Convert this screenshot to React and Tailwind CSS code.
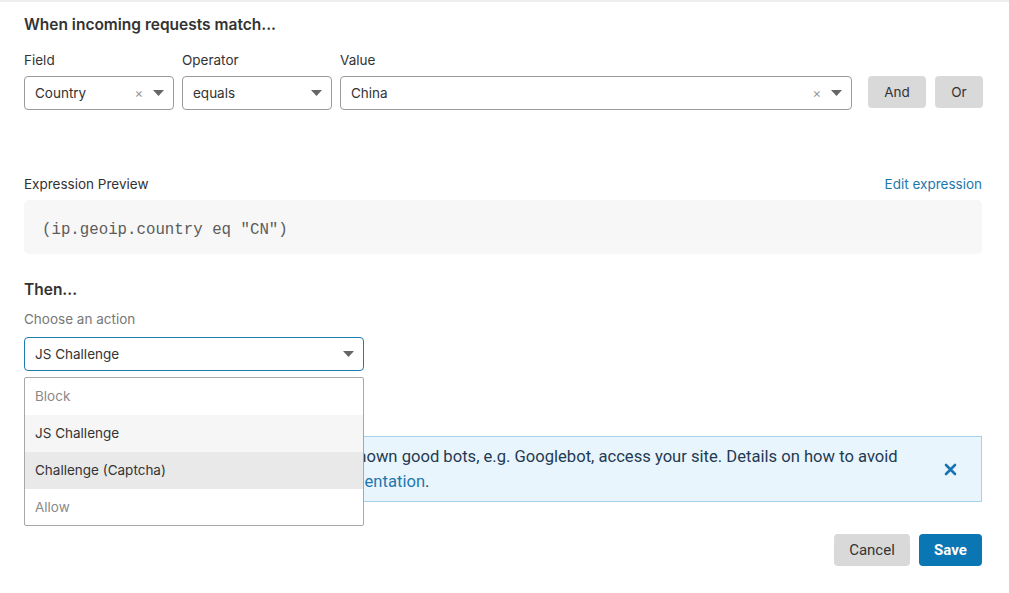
import React from "react";

const Caret = () => (
  <svg width="11" height="6" viewBox="0 0 11 6" className="shrink-0">
    <path d="M0 0 L11 0 L5.5 6 Z" fill="#666" />
  </svg>
);

const Clear = () => (
  <span className="text-[13px] leading-none text-[#999] mr-[10px]" style={{ fontFamily: "Inter, sans-serif" }}>
    ×
  </span>
);

function SelectBox({ width, value, clearable }) {
  return (
    <div
      className={`${width} h-[34px] flex items-center border border-[#9a9a9a] rounded-[4px] bg-white pl-[10px] pr-[9px]`}
    >
      <span className="flex-1 text-[13.5px] text-[#333]">{value}</span>
      {clearable && <Clear />}
      <Caret />
    </div>
  );
}

export default function App() {
  return (
    <div
      className="w-[1009px] h-[593px] bg-white border-t-2 border-[#eeeeee] overflow-hidden"
      style={{ fontFamily: "Inter, 'Noto Sans', sans-serif" }}
    >
      <div className="ml-6 w-[958px] pt-[11px]">
        <h2 className="text-[15.5px] leading-[24px] font-semibold text-[#333]">
          When incoming requests match...
        </h2>

        <div className="mt-[13px] flex items-start">
          <div className="flex flex-col">
            <span className="text-[13.5px] leading-[20px] text-[#333]">Field</span>
            <div className="mt-[6px]">
              <SelectBox width="w-[150px]" value="Country" clearable />
            </div>
          </div>
          <div className="flex flex-col ml-[8px]">
            <span className="text-[13.5px] leading-[20px] text-[#333]">Operator</span>
            <div className="mt-[6px]">
              <SelectBox width="w-[150px]" value="equals" />
            </div>
          </div>
          <div className="flex flex-col ml-[8px]">
            <span className="text-[13.5px] leading-[20px] text-[#333]">Value</span>
            <div className="mt-[6px]">
              <SelectBox width="w-[512px]" value="China" clearable />
            </div>
          </div>
          <div className="flex ml-[16px] mt-[26px] gap-[9px]">
            <button className="w-[58px] h-[32px] rounded-[4px] bg-[#d9d9d9] text-[13.5px] text-[#333]">
              And
            </button>
            <button className="w-[48px] h-[32px] rounded-[4px] bg-[#d9d9d9] text-[13.5px] text-[#333]">
              Or
            </button>
          </div>
        </div>

        <div className="mt-[64px] flex items-center justify-between">
          <span className="text-[13.5px] leading-[20px] text-[#333]">Expression Preview</span>
          <a className="text-[13.5px] leading-[20px] text-[#1d78ad]">Edit expression</a>
        </div>
        <div className="mt-[6px] h-[54px] rounded-[5px] bg-[#f7f7f8] flex items-center pl-[18px] pt-[7px]">
          <span
            className="text-[15.75px] text-[#5c5c5c]"
            style={{ fontFamily: "'Liberation Mono', 'Courier New', monospace" }}
          >
            (ip.geoip.country eq "CN")
          </span>
        </div>

        <h3 className="mt-[24px] text-[15.5px] leading-[24px] font-semibold text-[#333]">Then...</h3>
        <div className="mt-[7px] text-[13.5px] leading-[20px] text-[#777]">Choose an action</div>

        <div className="relative mt-[8px] w-[340px]">
          <div className="h-[34px] flex items-center border border-[#1c7cb0] rounded-[4px] bg-white pl-[10px] pr-[9px]">
            <span className="flex-1 text-[13.5px] text-[#333]">JS Challenge</span>
            <Caret />
          </div>
          <div className="absolute left-0 top-[40px] w-[340px] border border-[#a8a8a8] rounded-[2px] bg-white z-10 text-[13.5px]">
            <div className="h-[37px] flex items-center pl-[10px] text-[#8a8a8a]">Block</div>
            <div className="h-[37px] flex items-center pl-[10px] text-[#333] bg-[#f6f6f6]">JS Challenge</div>
            <div className="h-[37px] flex items-center pl-[10px] text-[#333] bg-[#e9e9e9]">Challenge (Captcha)</div>
            <div className="h-[36px] flex items-center pl-[10px] text-[#8a8a8a]">Allow</div>
          </div>
        </div>

        <div className="mt-[65px] h-[66px] border border-[#a5d1ea] bg-[#e9f5fd] flex items-center pl-[17px] pr-[24px]">
          <p
            className="flex-1 text-[16.6px] leading-[25px] text-[#1f3b52] whitespace-nowrap"
            style={{ fontFamily: "Roboto, 'Liberation Sans', sans-serif" }}
          >
            Heads up: the rule can block or challenge known good bots, e.g. Googlebot, access your site. Details on how to avoid
            <br />
            these may be found in our developer docum
            <a className="text-[#1d78ad]">entation</a>.
          </p>
          <svg width="13" height="13" viewBox="0 0 13 13">
            <path d="M2 2 L11 11 M11 2 L2 11" stroke="#1873b5" strokeWidth="2.6" strokeLinecap="round" />
          </svg>
        </div>

        <div className="mt-[32px] flex justify-end gap-[9px]">
          <button
            className="w-[76px] h-[32px] rounded-[4px] bg-[#d9d9d9] text-[15px] text-[#333]"
            style={{ fontFamily: "Roboto, 'Liberation Sans', sans-serif" }}
          >
            Cancel
          </button>
          <button
            className="w-[63px] h-[32px] rounded-[4px] bg-[#0b76b4] text-[15px] font-bold text-white"
            style={{ fontFamily: "Roboto, 'Liberation Sans', sans-serif" }}
          >
            Save
          </button>
        </div>
      </div>
    </div>
  );
}
